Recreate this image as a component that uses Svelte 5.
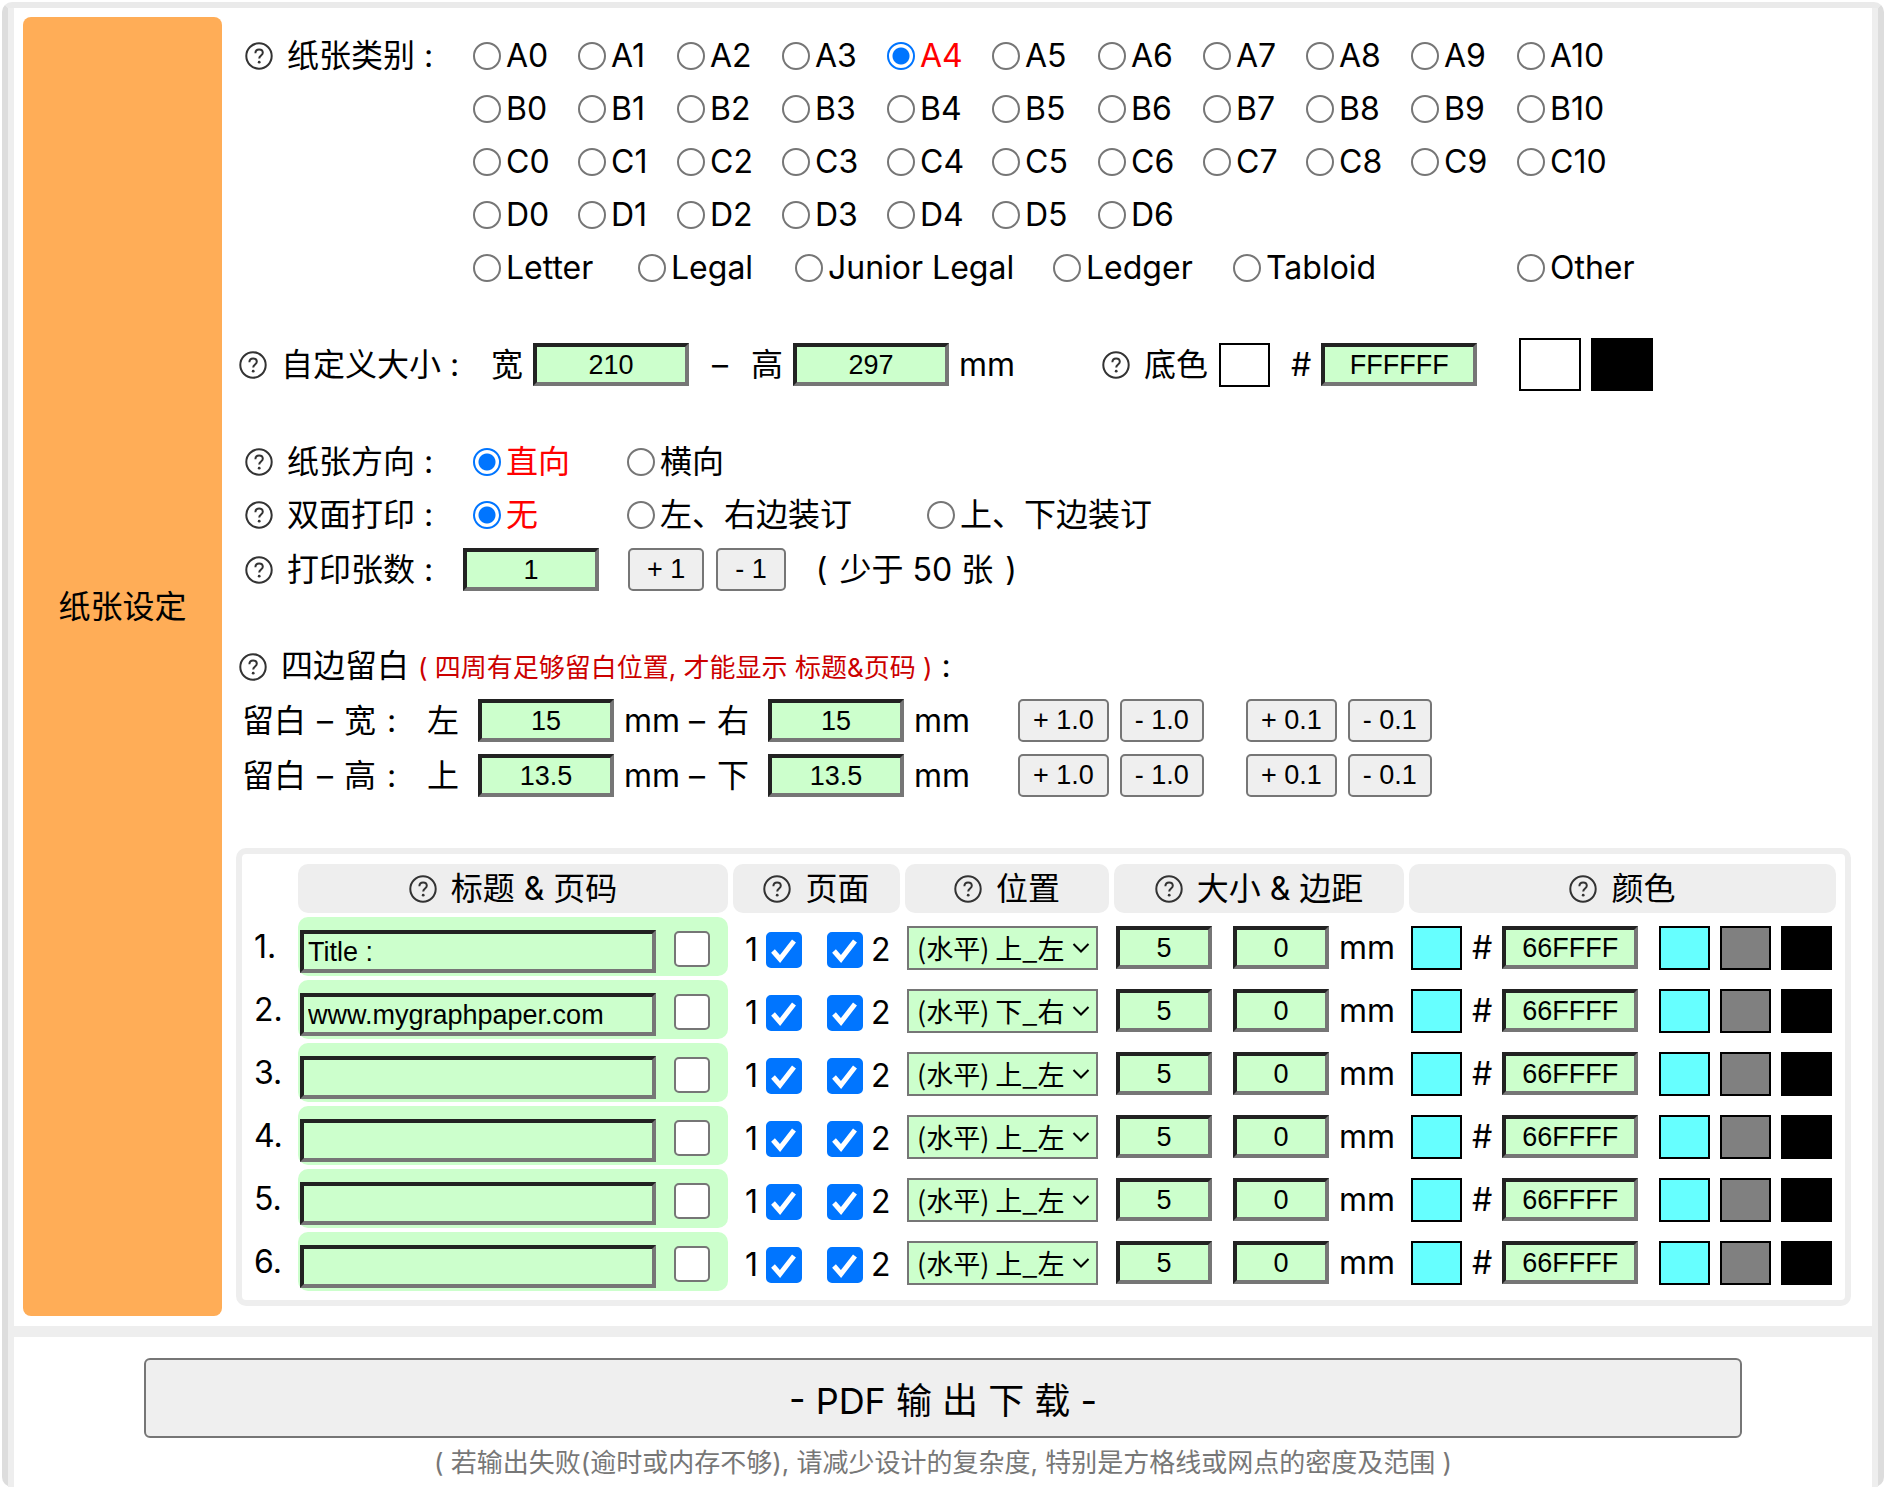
<script>
  let paper = $state("A4");
  let orientation = $state("直向");
  let duplex = $state("无");
  let width = $state("210");
  let height = $state("297");
  let background = $state("FFFFFF");
  let copies = $state(1);
  let margins = $state({ left: "15", right: "15", top: "13.5", bottom: "13.5" });

  const series = [
    ["A", 11],
    ["B", 11],
    ["C", 11],
    ["D", 7],
  ];
  const named = ["Letter", "Legal", "Junior Legal", "Ledger", "Tabloid", "Other"];
  const positions = ["(水平) 上_左", "(水平) 上_右", "(水平) 下_左", "(水平) 下_右"];
  const marginRows = [
    { name: "宽", a: "左", b: "右", keys: ["left", "right"] },
    { name: "高", a: "上", b: "下", keys: ["top", "bottom"] },
  ];

  let titles = $state(
    ["Title :", "www.mygraphpaper.com", "", "", "", ""].map((text, i) => ({
      text,
      numbered: false,
      page1: true,
      page2: true,
      position: i === 1 ? positions[3] : positions[0],
      size: "5",
      gap: "0",
      color: "66FFFF",
    }))
  );

  function changeCopies(step) {
    copies = Math.min(49, Math.max(1, Number(copies) + step));
  }

  function changeMargins(keys, step) {
    for (const key of keys) {
      margins[key] = String(Math.round((Number(margins[key]) + step) * 10) / 10);
    }
  }
</script>

{#snippet help()}
  <svg class="help" viewBox="0 0 28 28" aria-hidden="true">
    <circle cx="14" cy="14" r="12.7" />
    <path d="M10.4 11.2c0-2.3 1.5-3.7 3.7-3.7s3.7 1.4 3.7 3.3c0 2.7-3.6 2.9-3.6 5.8" />
    <circle class="dot" cx="14.2" cy="20.2" r="1.4" />
  </svg>
{/snippet}

{#snippet paperOption(name)}
  <label class="option" class:selected={paper === name}>
    <input type="radio" name="paper" value={name} bind:group={paper} />{name}
  </label>
{/snippet}

<main>
  <section class="settings">
    <h2>纸张设定</h2>
    <div class="content">
      <div class="group indent papers">
        <div class="label">{@render help()}<span>纸张类别 :</span></div>
        <div class="sizes">
          {#each series as [letter, count]}
            <div class="row series">
              {#each Array(count) as _, i}
                {@render paperOption(letter + i)}
              {/each}
            </div>
          {/each}
          <div class="row named">
            {#each named as name}
              {@render paperOption(name)}
            {/each}
          </div>
        </div>
      </div>

      <div class="group custom">
        <div class="label wide">{@render help()}<span>自定义大小 :</span></div>
        <label class="field">宽<input class="box medium" bind:value={width} /></label>
        <span class="dash">–</span>
        <label class="field">高<input class="box medium" bind:value={height} /></label>
        <span class="unit">mm</span>
        <div class="base">{@render help()}<span>底色</span></div>
        <span class="swatch" style="background: #{background}"></span>
        <label class="field hash">#<input class="box medium" bind:value={background} /></label>
        <button class="swatch big" style="background: #fff" aria-label="白" onclick={() => (background = "FFFFFF")}></button>
        <button class="swatch big" style="background: #000" aria-label="黑" onclick={() => (background = "000000")}></button>
      </div>

      <div class="group indent">
        <div class="row print">
          <div class="label">{@render help()}<span>纸张方向 :</span></div>
          {#each ["直向", "横向"] as name}
            <label class="option" class:selected={orientation === name}>
              <input type="radio" name="orientation" value={name} bind:group={orientation} />{name}
            </label>
          {/each}
        </div>
        <div class="row print">
          <div class="label">{@render help()}<span>双面打印 :</span></div>
          {#each ["无", "左、右边装订", "上、下边装订"] as name}
            <label class="option" class:selected={duplex === name}>
              <input type="radio" name="duplex" value={name} bind:group={duplex} />{name}
            </label>
          {/each}
        </div>
        <div class="row copies">
          <label class="label" for="copies">{@render help()}<span>打印张数 :</span></label>
          <input id="copies" class="box small" bind:value={copies} />
          <button class="step plus" onclick={() => changeCopies(1)}>+ 1</button>
          <button class="step" onclick={() => changeCopies(-1)}>- 1</button>
          <span class="limit"><span>(</span><span>少于 50 张</span><span>)</span></span>
        </div>
      </div>

      <div class="group margins">
        <div class="row">
          <div class="label wide">
            {@render help()}<span>四边留白 <small>( 四周有足够留白位置, 才能显示 标题&amp;页码 )</small> :</span>
          </div>
        </div>
        {#each marginRows as row}
          <div class="margin">
            <span class="name"><span>留白</span><span>–</span><span>{row.name}</span><span>:</span></span>
            <label class="field">{row.a}<input class="box small" bind:value={margins[row.keys[0]]} /></label>
            <span class="between">mm –</span>
            <label class="field">{row.b}<input class="box small" bind:value={margins[row.keys[1]]} /></label>
            <span class="unit">mm</span>
            <div class="steps">
              <button class="step" onclick={() => changeMargins(row.keys, 1)}>+ 1.0</button>
              <button class="step" onclick={() => changeMargins(row.keys, -1)}>- 1.0</button>
            </div>
            <div class="steps">
              <button class="step" onclick={() => changeMargins(row.keys, 0.1)}>+ 0.1</button>
              <button class="step" onclick={() => changeMargins(row.keys, -0.1)}>- 0.1</button>
            </div>
          </div>
        {/each}
      </div>

      <div class="titles">
        <table>
          <colgroup>
            <col class="c-num" /><col class="c-title" /><col class="c-page" />
            <col class="c-position" /><col class="c-size" /><col class="c-color" />
          </colgroup>
          <thead>
            <tr>
              <td></td>
              {#each ["标题 & 页码", "页面", "位置", "大小 & 边距", "颜色"] as heading}
                <th scope="col"><div class="heading">{@render help()}<span>{heading}</span></div></th>
              {/each}
            </tr>
          </thead>
          <tbody>
            {#each titles as title, i}
              <tr>
                <td class="num">{i + 1}.</td>
                <td class="title">
                  <div class="cell">
                    <input class="box text" aria-label="标题 {i + 1}" bind:value={title.text} />
                    <input type="checkbox" aria-label="页码 {i + 1}" bind:checked={title.numbered} />
                  </div>
                </td>
                <td>
                  <div class="cell pages">
                    <label>1<input type="checkbox" bind:checked={title.page1} /></label>
                    <label><input type="checkbox" bind:checked={title.page2} />2</label>
                  </div>
                </td>
                <td>
                  <div class="cell select">
                    <select aria-label="位置 {i + 1}" bind:value={title.position}>
                      {#each positions as position}
                        <option>{position}</option>
                      {/each}
                    </select>
                    <svg viewBox="0 0 18 12" aria-hidden="true"><path d="M1.5 2 9 9.5 16.5 2" /></svg>
                  </div>
                </td>
                <td>
                  <div class="cell size">
                    <input class="box tiny" aria-label="大小 {i + 1}" bind:value={title.size} />
                    <input class="box tiny" aria-label="边距 {i + 1}" bind:value={title.gap} />
                    <span>mm</span>
                  </div>
                </td>
                <td>
                  <div class="cell color">
                    <span class="swatch" style="background: #{title.color}"></span>
                    <label class="field">#<input class="box small" bind:value={title.color} /></label>
                    <div class="swatches">
                      {#each ["66FFFF", "808080", "000000"] as color}
                        <button class="swatch" style="background: #{color}" aria-label={color} onclick={() => (title.color = color)}></button>
                      {/each}
                    </div>
                  </div>
                </td>
              </tr>
            {/each}
          </tbody>
        </table>
      </div>
    </div>
  </section>

  <section class="output">
    <button>- PDF 输 出 下 载 -</button>
    <p>( 若输出失败(逾时或内存不够), 请减少设计的复杂度, 特别是方格线或网点的密度及范围 )</p>
  </section>
</main>

<style>
  :global(body) {
    background: #fff;
  }

  main {
    box-sizing: border-box;
    margin: 2px 4px 0 2px;
    border: 6px solid #ddd;
    border-top-color: #eaeaea;
    border-bottom: none;
    border-radius: 10px;
    font-family: Inter, "Noto Sans CJK SC", sans-serif;
    font-size: 32px;
    line-height: 40px;
    color: #000;
    white-space: nowrap;
  }

  section {
    border: 6px solid #eee;
    border-top: none;
    border-bottom: none;
  }

  .settings {
    display: flex;
    padding: 9px 8px 10px 9px;
    border-bottom: 11px solid #eee;
  }

  h2 {
    display: flex;
    align-items: center;
    justify-content: center;
    box-sizing: border-box;
    flex: none;
    width: 199px;
    margin: 0 14px 0 0;
    padding-bottom: 120px;
    border-radius: 8px;
    background: #ffad57;
    font-size: 32px;
    font-weight: normal;
  }

  .content {
    flex: 1;
    min-width: 0;
    padding: 12px 13px 10px 0;
  }

  .group {
    margin-bottom: 44px;
  }

  .indent {
    padding-left: 9px;
  }

  .help {
    flex: none;
    width: 28px;
    height: 28px;
    fill: none;
    stroke: #333;
    stroke-width: 2;
  }

  .help .dot {
    fill: #333;
    stroke: none;
  }

  .label {
    display: flex;
    align-items: center;
    gap: 14px;
    width: 228px;
    flex: none;
  }

  .wide {
    width: 252px;
    padding-left: 3px;
  }

  .row {
    display: flex;
    align-items: center;
    height: 53px;
  }

  .papers {
    display: flex;
    align-items: flex-start;
  }

  .papers .label {
    height: 53px;
  }

  .series {
    display: grid;
    grid-template-columns: 105px 99px 105px 105px 105px 106px 105px 103px 105px 106px auto;
  }

  .named {
    display: grid;
    grid-template-columns: 165px 157px 258px 180px 284px auto;
  }

  .option {
    display: flex;
    align-items: center;
    gap: 5px;
  }

  .selected {
    color: #f00;
  }

  input[type="radio"] {
    appearance: none;
    flex: none;
    box-sizing: border-box;
    width: 28px;
    height: 28px;
    margin: 0;
    border: 2px solid #767676;
    border-radius: 50%;
    background: #fff;
  }

  input[type="radio"]:checked {
    border-color: #0075ff;
    background: radial-gradient(circle, #0075ff 8px, #fff 9px);
  }

  .box {
    box-sizing: border-box;
    height: 43px;
    margin: 0;
    padding: 1px 4px 0;
    border: 4px solid;
    border-color: #222 #767676 #767676 #222;
    border-radius: 0;
    background: #cfc;
    color: #000;
    font-family: "Liberation Sans", Arial, sans-serif;
    font-size: 27px;
    text-align: center;
  }

  .medium {
    width: 156px;
  }

  .small {
    width: 136px;
  }

  .tiny {
    width: 96px;
  }

  .text {
    width: 356px;
    text-align: left;
  }

  .swatch {
    box-sizing: border-box;
    flex: none;
    width: 51px;
    height: 44px;
    padding: 0;
    border: 2px solid #000;
    border-radius: 0;
  }

  .big {
    width: 62px;
    height: 53px;
  }

  .custom {
    display: flex;
    align-items: center;
    height: 53px;
  }

  .field {
    display: flex;
    align-items: center;
    gap: 10px;
  }

  .dash {
    width: 62px;
    text-align: center;
  }

  .unit {
    width: 104px;
    padding-left: 10px;
  }

  .custom .unit {
    width: 143px;
  }

  .base {
    display: flex;
    align-items: center;
    gap: 14px;
    margin-right: 11px;
  }

  .hash {
    margin: 0 42px 0 21px;
  }

  .big + .big {
    margin-left: 10px;
  }

  .print .option {
    width: 154px;
  }

  .print .option + .option {
    width: 300px;
  }

  .copies {
    padding-top: 2px;
  }

  .copies .label {
    width: 218px;
  }

  .step {
    box-sizing: border-box;
    height: 43px;
    padding: 0 13px;
    border: 2px solid #767676;
    border-radius: 5px;
    background: #efefef;
    color: #000;
    font-family: "Liberation Sans", Arial, sans-serif;
    font-size: 27px;
  }

  .copies .step {
    padding: 0 17px;
  }

  .plus {
    margin: 0 12px 0 29px;
  }

  .limit {
    display: flex;
    gap: 12px;
    margin-left: 30px;
  }

  small {
    color: #c00;
    font-size: 26px;
  }

  .margins {
    margin-bottom: 45px;
  }

  .margin {
    display: flex;
    align-items: center;
    height: 55px;
    padding-left: 6px;
  }

  .name {
    display: flex;
    gap: 11px;
    width: 185px;
  }

  .margin .field {
    gap: 19px;
  }

  .between {
    width: 103px;
    box-sizing: border-box;
    padding-left: 10px;
  }

  .steps {
    display: flex;
    gap: 11px;
    margin-right: 42px;
  }

  .titles {
    border: 6px solid #eee;
    border-radius: 10px;
    padding: 6px 4px 5px;
  }

  table {
    width: 100%;
    table-layout: fixed;
    border-collapse: separate;
    border-spacing: 5px 4px;
  }

  .c-num {
    width: 42px;
  }

  .c-title {
    width: 430px;
  }

  .c-page {
    width: 167px;
  }

  .c-position {
    width: 204px;
  }

  .c-size {
    width: 290px;
  }

  th {
    height: 49px;
    padding: 0;
    border-radius: 10px;
    background: #eee;
    font-weight: normal;
  }

  .heading {
    display: flex;
    align-items: center;
    justify-content: center;
    gap: 14px;
  }

  td {
    padding: 0;
  }

  .num {
    padding-left: 3px;
  }

  .title {
    border-radius: 10px;
    background: #cfc;
  }

  .cell {
    display: flex;
    align-items: center;
    box-sizing: border-box;
    height: 59px;
    padding: 2px 2px 0;
  }

  .title .cell {
    gap: 18px;
    padding-top: 10px;
  }

  .title input[type="checkbox"] {
    margin-bottom: 6px;
  }

  input[type="checkbox"] {
    appearance: none;
    flex: none;
    box-sizing: border-box;
    width: 36px;
    height: 36px;
    margin: 0;
    border: 2px solid #767676;
    border-radius: 5px;
    background: #fff;
  }

  input[type="checkbox"]:checked {
    border-color: #0075ff;
    background: #0075ff url("data:image/svg+xml,%3Csvg xmlns='http://www.w3.org/2000/svg' viewBox='0 0 32 32'%3E%3Cpath d='M5 17l7 8L26 7' fill='none' stroke='white' stroke-width='5'/%3E%3C/svg%3E") center / 32px no-repeat;
  }

  .pages {
    gap: 25px;
    padding: 7px 0 0 12px;
  }

  .pages label {
    display: flex;
    align-items: center;
    gap: 8px;
  }

  .select {
    position: relative;
  }

  select {
    appearance: none;
    box-sizing: border-box;
    width: 191px;
    height: 44px;
    padding: 0 0 0 8px;
    border: 2px solid #767676;
    border-radius: 0;
    background: #cfc;
    color: #000;
    font-family: "Noto Sans CJK SC", sans-serif;
    font-size: 27px;
  }

  .select svg {
    position: absolute;
    left: 167px;
    width: 18px;
    height: 12px;
    fill: none;
    stroke: #000;
    stroke-width: 2;
    pointer-events: none;
  }

  .size .tiny + .tiny {
    margin: 0 10px 0 21px;
  }

  .color .field {
    margin: 0 21px 0 10px;
  }

  .swatches {
    display: flex;
    gap: 10px;
  }

  .output {
    display: flex;
    flex-direction: column;
    align-items: center;
    padding-top: 21px;
  }

  .output button {
    width: 86%;
    height: 80px;
    border: 2px solid #767676;
    border-radius: 6px;
    background: #efefef;
    color: #000;
    font-family: inherit;
    font-size: 36px;
  }

  .output p {
    margin: 5px 0 4px;
    color: #777;
    font-size: 26px;
  }
</style>
